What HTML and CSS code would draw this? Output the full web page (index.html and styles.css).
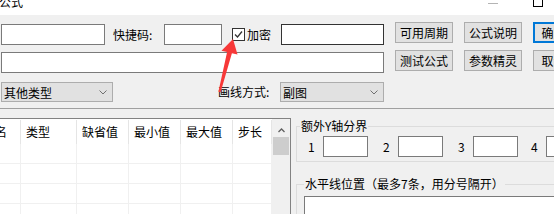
FILE: index.html
```html
<!DOCTYPE html>
<html lang="zh-CN">
<head>
<meta charset="utf-8">
<title>公式</title>
<link rel="stylesheet" href="styles.css">
</head>
<body>
<div class="window">
  <div class="titlebar">
    <span class="title">公式</span>
    <span class="tb-min"></span>
    <span class="tb-max"></span>
  </div>

  <div class="top">
    <div class="form">
      <div class="row row1">
        <input class="input w-name" type="text">
        <span class="label lbl-quick">快捷码:</span>
        <input class="input w-quick" type="text">
        <span class="checkbox"><svg width="11" height="11" viewBox="0 0 11 11"><polyline points="2,5.5 4.5,8 9,2.5" fill="none" stroke="#333" stroke-width="1.3"/></svg></span>
        <span class="label lbl-enc">加密</span>
        <input class="input w-pwd" type="text">
      </div>
      <div class="row row2">
        <input class="input w-full" type="text">
      </div>
      <div class="row row3">
        <div class="select w-type"><span>其他类型</span><svg class="chev" width="8" height="5" viewBox="0 0 8 5"><polyline points="0.5,0.5 4,4 7.5,0.5" fill="none" stroke="#707070" stroke-width="1"/></svg></div>
        <span class="label lbl-draw">画线方式:</span>
        <div class="select w-draw"><span>副图</span><svg class="chev" width="8" height="5" viewBox="0 0 8 5"><polyline points="0.5,0.5 4,4 7.5,0.5" fill="none" stroke="#707070" stroke-width="1"/></svg></div>
      </div>
    </div>
    <div class="buttons">
      <button class="btn">可用周期</button>
      <button class="btn">公式说明</button>
      <button class="btn btn-ok">确定</button>
      <button class="btn">测试公式</button>
      <button class="btn">参数精灵</button>
      <button class="btn">取消</button>
    </div>
  </div>

  <div class="sep"></div>

  <div class="bottom">
    <div class="table">
      <div class="grid">
        <div class="hcell">参数名</div>
        <div class="hcell">类型</div>
        <div class="hcell">缺省值</div>
        <div class="hcell">最小值</div>
        <div class="hcell">最大值</div>
        <div class="hcell">步长</div>

        <div class="cell"></div><div class="cell"></div><div class="cell"></div><div class="cell"></div><div class="cell"></div><div class="cell"></div>
        <div class="cell"></div><div class="cell"></div><div class="cell"></div><div class="cell"></div><div class="cell"></div><div class="cell"></div>
        <div class="cell"></div><div class="cell"></div><div class="cell"></div><div class="cell"></div><div class="cell"></div><div class="cell"></div>
        <div class="cell"></div><div class="cell"></div><div class="cell"></div><div class="cell"></div><div class="cell"></div><div class="cell"></div>
      </div>
      <div class="vscroll">
        <svg class="caret" width="7" height="5" viewBox="0 0 7 5"><polyline points="0.5,4 3.5,1 6.5,4" fill="none" stroke="#606060" stroke-width="1.3"/></svg>
        <div class="thumb"></div>
      </div>
    </div>

    <div class="side">
      <div class="group g-axis">
        <div class="group-title">额外Y轴分界</div>
        <div class="yrow">
          <span class="yitem"><span class="ylbl">1</span><input class="input w-y" type="text"></span>
          <span class="yitem"><span class="ylbl">2</span><input class="input w-y" type="text"></span>
          <span class="yitem"><span class="ylbl">3</span><input class="input w-y" type="text"></span>
          <span class="yitem"><span class="ylbl">4</span><input class="input w-y" type="text"></span>
        </div>
      </div>
      <div class="group g-hline">
        <div class="group-title">水平线位置（最多7条，用分号隔开）</div>
        <div class="input textarea"></div>
      </div>
    </div>
  </div>

  <svg class="annot-arrow" width="554" height="214" viewBox="0 0 554 214">
    <polygon points="233,39 237.5,54.5 231.9,53.2 220.6,92.3 218.4,91.8 227.1,52 221.5,50.8" fill="#f73838"/>
  </svg>
</div>
</body>
</html>
```

FILE: styles.css
```css
* {
  box-sizing: border-box;
}

html,
body {
  margin: 0;
  padding: 0;
}

body {
  width: 554px;
  height: 214px;
  overflow: hidden;
  background: #f0f0f0;
  font-family: "Noto Sans CJK SC", "Microsoft YaHei", sans-serif;
  font-size: 12px;
  color: #000;
}

.window {
  position: relative;
  width: 554px;
  height: 214px;
  overflow: hidden;
}

/* title bar */
.titlebar {
  height: 15px;
  background: #fff;
  display: flex;
  align-items: flex-start;
  overflow: hidden;
}

.title {
  margin: -4px 0 0 -1px;
  line-height: 12px;
  font-size: 12px;
}

.tb-min {
  margin-left: auto;
  margin-top: 3px;
  width: 10px;
  height: 1px;
  background: #b4b4b4;
}

.tb-max {
  margin-left: 35px;
  margin-right: 11px;
  margin-top: -3px;
  width: 10px;
  height: 10px;
  border: 1px solid #000;
}

/* top area */
.top {
  display: flex;
  height: 93px;
}

.form {
  margin-left: 1px;
  width: 383px;
  flex: none;
  padding-top: 9px;
  display: flex;
  flex-direction: column;
}

.row {
  display: flex;
  align-items: center;
}

.row1 {
  height: 21px;
}

.row2 {
  height: 21px;
  margin-top: 7px;
}

.row3 {
  height: 20px;
  margin-top: 9px;
}

.input {
  display: block;
  height: 21px;
  margin: 0;
  padding: 0 3px;
  border: 1px solid #7a7a7a;
  background: #fff;
  font: inherit;
  outline: none;
  flex: none;
}

.label {
  flex: none;
  white-space: nowrap;
  line-height: 16px;
}

.w-name {
  width: 104px;
}

.lbl-quick {
  margin-left: 8px;
  width: 51px;
}

.w-quick {
  width: 58px;
}

.checkbox {
  flex: none;
  margin-left: 10px;
  width: 13px;
  height: 13px;
  border: 1px solid #333;
  background: #fff;
  display: flex;
}

.lbl-enc {
  margin-left: 2px;
  width: 34px;
}

.w-pwd {
  width: 103px;
  border-color: #333;
}

.w-full {
  width: 383px;
}

.select {
  flex: none;
  height: 20px;
  border: 1px solid #adadad;
  background: #e1e1e1;
  display: flex;
  align-items: center;
  padding: 0 5px 0 2px;
  white-space: nowrap;
}

.chev {
  margin-left: auto;
}

.w-type {
  width: 112px;
}

.lbl-draw {
  margin-left: auto;
  width: 62px;
}

.w-draw {
  width: 104px;
}

/* buttons */
.buttons {
  margin-left: 11px;
  padding-top: 7px;
  display: grid;
  grid-template-columns: 58px 58px 41px;
  grid-auto-rows: 21px;
  column-gap: 11px;
  row-gap: 7px;
  align-content: start;
  flex: none;
}

.btn {
  margin: 0;
  padding: 0;
  height: 21px;
  border: 1px solid #adadad;
  background: #e1e1e1;
  font: inherit;
  color: #000;
  white-space: nowrap;
}

.btn-ok {
  border: 2px solid #0078d7;
}

.sep {
  height: 1px;
  background: #a0a0a0;
}

/* bottom area */
.bottom {
  display: flex;
  align-items: flex-start;
}

.table {
  flex: none;
  margin-top: 9px;
  margin-left: -35px;
  width: 326px;
  height: 200px;
  border: 1px solid #828282;
  background: #fff;
  display: flex;
}

.grid {
  width: 306px;
  flex: none;
  display: grid;
  grid-template-columns: 55px 56px 52px 52px 52px 39px;
  grid-template-rows: 25px;
  grid-auto-rows: 20px;
  align-content: start;
}

.hcell {
  position: relative;
  padding-left: 5px;
  line-height: 25px;
  white-space: nowrap;
  overflow: hidden;
  direction: ltr;
}

.hcell::after {
  content: "";
  position: absolute;
  right: 0;
  top: 1px;
  bottom: 0;
  width: 1px;
  background: #e5e5e5;
}

.cell {
  border-right: 1px solid #f0f0f0;
  border-bottom: 1px solid #f0f0f0;
}

.vscroll {
  width: 18px;
  flex: none;
  background: #f0f0f0;
  display: flex;
  flex-direction: column;
  align-items: center;
}

.caret {
  margin-top: 9px;
}

.thumb {
  margin-top: 4px;
  width: 16px;
  height: 18px;
  background: #cdcdcd;
}

/* side panel */
.side {
  flex: none;
  width: 320px;
  margin-left: 5px;
  margin-top: 17px;
}

.group {
  border: 1px solid #dcdcdc;
}

.group-title {
  width: fit-content;
  margin: -8px 0 0 3px;
  padding: 0 1px;
  height: 14px;
  line-height: 14px;
  background: #f0f0f0;
  white-space: nowrap;
}

.g-axis {
  height: 36px;
}

.yrow {
  display: flex;
  margin-top: 3px;
  padding-left: 10px;
}

.yitem {
  display: flex;
  align-items: center;
  margin-right: 14px;
}

.yitem:nth-child(3) {
  margin-right: 12px;
}

.ylbl {
  width: 16px;
  padding-left: 1px;
  line-height: 14px;
}

.w-y {
  width: 45px;
}

.g-hline {
  margin-top: 22px;
  height: 60px;
}

.g-hline .group-title {
  margin-left: 7px;
}

.textarea {
  margin: 5px 0 0 7px;
  height: 40px;
  width: 300px;
}

.annot-arrow {
  position: absolute;
  left: 0;
  top: 0;
  pointer-events: none;
}
```
